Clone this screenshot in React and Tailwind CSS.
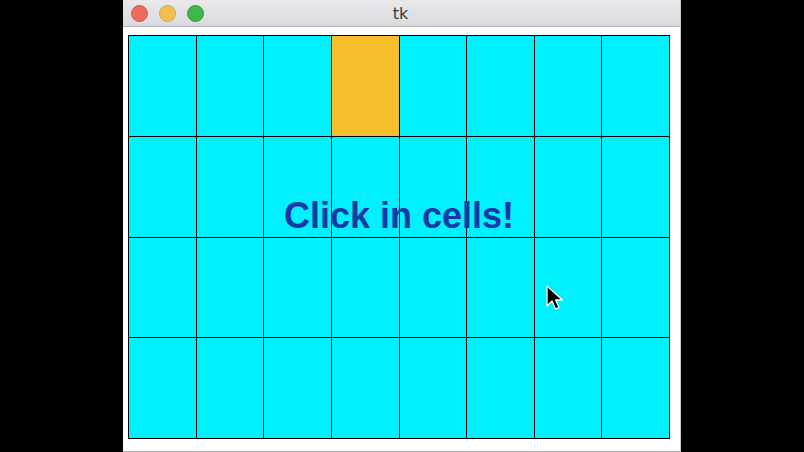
import React from "react";

export default function App() {
  const cells = Array.from({ length: 32 }, (_, i) => i);
  return (
    <div className="w-[804px] h-[452px] bg-black overflow-hidden" style={{ fontFamily: '"Liberation Sans", Arial, sans-serif' }}>
      <div className="ml-[123px] w-[558px] h-[452px] flex flex-col bg-white border-r border-[#c8c8c8]">
        <div className="relative h-[27px] shrink-0 border-b border-[#b4b4b4] bg-gradient-to-b from-[#e8e9ec] to-[#d9d9df] flex items-center">
          <div className="absolute top-0 left-0 right-0 h-[2px] bg-[#ede6e8]" />
          <div className="flex items-center gap-[11px] pl-[8px]">
            <div className="w-[17px] h-[17px] rounded-full bg-[#ee6a5e] border border-[#d9584d]" />
            <div className="w-[17px] h-[17px] rounded-full bg-[#f5bf4f] border border-[#dca63a]" />
            <div className="w-[17px] h-[17px] rounded-full bg-[#3fb64a] border border-[#2fa23b]" />
          </div>
          <div className="absolute inset-0 flex items-center justify-center text-[16px] text-[#3a3a3a] pt-[1px] pr-[2px]" style={{ fontFamily: '"DejaVu Sans", sans-serif' }}>
            tk
          </div>
        </div>
        <div className="flex-1 pl-[5px] pt-[8px] border-b border-[#a8a8a8]">
          <div className="relative w-[542px] h-[404px] grid grid-cols-8 grid-rows-4 gap-px bg-black p-px">
            {cells.map((i) => (
              <div key={i} className={i === 3 ? "bg-[#f6be2c]" : "bg-[#00f0fe]"} />
            ))}
            <div className="absolute left-0 right-0 top-[163px] flex justify-center text-[36px] font-bold text-[#1838a8] leading-none">
              Click in cells!
            </div>
            <svg className="absolute left-[418px] top-[250px]" width="19" height="26" viewBox="0 0 19 26">
              <path d="M1 1 L1 21 L6 16 L9.5 24 L13 22.5 L9.6 15 L16.5 15 Z" fill="black" stroke="white" strokeWidth="1.3" strokeLinejoin="round" />
            </svg>
          </div>
        </div>
      </div>
    </div>
  );
}
